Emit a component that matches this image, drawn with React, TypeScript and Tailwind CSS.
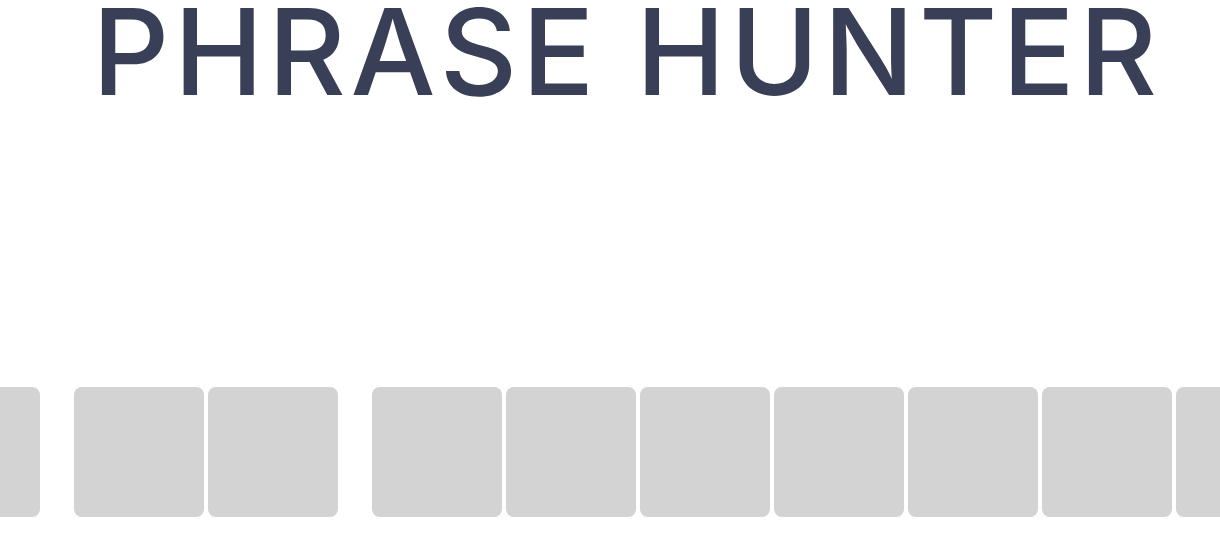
// letters per word in the hidden phrase
const words = [1, 2, 7];

export default function App() {
    return (
        <div className="h-[550px] w-full overflow-hidden bg-white">
            <h1
                className="pl-[34px] text-center text-[120px] font-medium leading-[103px] tracking-[4.75px] text-[#3a3f58]"
                style={{ fontFamily: 'Inter, sans-serif' }}
            >
                PHRASE HUNTER
            </h1>

            {/* phrase board */}
            <div className="mt-[284px] flex justify-center">
                {words.map((n, wi) => (
                    <div key={wi} className="flex shrink-0">
                        {wi > 0 && <div className="w-[30px] shrink-0" />}
                        {Array.from({ length: n }).map((_, i) => (
                            <div key={i} className="mr-[4px] h-[130px] w-[130px] shrink-0 rounded-lg bg-[#d3d3d3]" />
                        ))}
                    </div>
                ))}
            </div>
        </div>
    );
}
